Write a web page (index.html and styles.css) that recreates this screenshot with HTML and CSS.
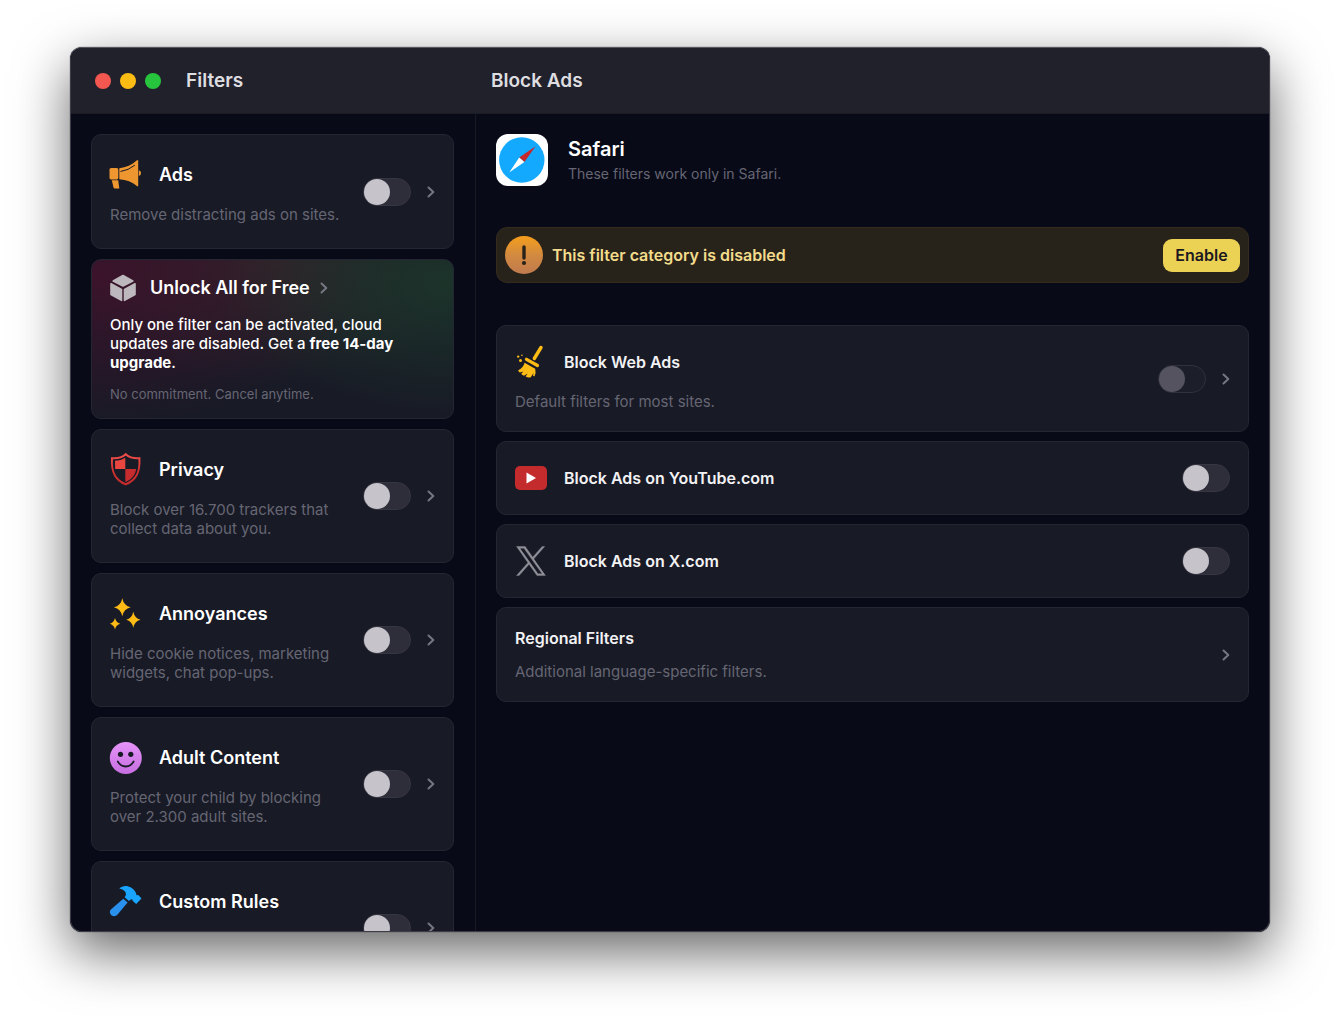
FILE: index.html
```html
<!DOCTYPE html>
<html lang="en">
<head>
<meta charset="utf-8">
<meta name="viewport" content="width=device-width, initial-scale=1">
<title>Filters</title>
<link rel="stylesheet" href="styles.css">
</head>
<body>
<svg class="defs" aria-hidden="true">
  <defs>
    <symbol id="chevron" viewBox="0 0 8 12"><path d="M1.5 1.5 6.3 6 1.5 10.5" fill="none" stroke="currentColor" stroke-width="2" stroke-linecap="round" stroke-linejoin="round"/></symbol>
  </defs>
</svg>
<div class="window">
  <header class="titlebar">
    <div class="titlebar-side">
      <div class="lights">
        <span class="light light-close"></span>
        <span class="light light-min"></span>
        <span class="light light-max"></span>
      </div>
      <h1 class="bar-title">Filters</h1>
    </div>
    <h2 class="bar-title">Block Ads</h2>
  </header>

  <div class="body">
    <nav class="sidebar">
      <section class="card">
        <div class="card-text">
          <div class="card-head">
            <svg class="icon" viewBox="0 0 32 32" aria-hidden="true">
              <g fill="#ee9630">
                <rect x="-.5" y="9" width="8.8" height="11.4" rx="1.6"/>
                <path d="M9.3 9.2C16 8.6 22 6 26.600 1.600Q28.200.3 28.200 2V26.400Q28.200 28.300 26.600 26.800 20 21 9.300 20.300z"/>
                <path d="M28.800 11.200a3 3 0 0 1 0 5.800z"/>
                <path d="M1.800 21.300H8.200L9.300 29.400H4.600Q3.800 29.400 3.500 28.500z"/>
              </g>
              <path d="M10.500 12.500Q18.500 11.300 24.800 6.200" fill="none" stroke="#181a26" stroke-width="1"/>
            </svg>
            <label class="card-title" for="sw-ads">Ads</label>
          </div>
          <p class="desc">Remove distracting ads on sites.</p>
        </div>
        <input class="switch" type="checkbox" id="sw-ads">
        <a class="chev" href="#ads" aria-label="Ads"><svg><use href="#chevron"/></svg></a>
      </section>

      <section class="promo">
        <a class="promo-head" href="#unlock">
          <svg class="promo-icon" viewBox="0 0 26 28" aria-hidden="true">
            <g fill="#bdb8bd" stroke="#bdb8bd" stroke-width="1.600" stroke-linejoin="round">
              <path d="M13 1.500 22.800 7 13 12 3.200 7z"/>
              <path d="M1 9.800 11.500 15.400V26.400L1 20.600z"/>
              <path d="M25 9.800 14.500 15.400V26.400L25 20.600z"/>
            </g>
          </svg>
          <span class="card-title">Unlock All for Free</span>
          <svg class="promo-chev"><use href="#chevron"/></svg>
        </a>
        <p class="promo-text">Only one filter can be activated, cloud updates are disabled. Get a <strong>free 14-day upgrade</strong>.</p>
        <p class="promo-note">No commitment. Cancel anytime.</p>
      </section>

      <section class="card">
        <div class="card-text">
          <div class="card-head">
            <svg class="icon" viewBox="0 0 32 32" aria-hidden="true">
              <defs><linearGradient id="red" x1="0" y1="0" x2="0" y2="1"><stop offset="0" stop-color="#f0504a"/><stop offset=".55" stop-color="#cf3030"/><stop offset="1" stop-color="#c42a2c"/></linearGradient></defs>
              <path d="M15.700.2C12.500 3 6.500 4.600 2 4.200C1.300 15 3 25.500 15.700 30.300C28.400 25.500 30.100 15 29.400 4.200C24.900 4.600 18.900 3 15.700.2z" fill="none" stroke="url(#red)" stroke-width="2"/>
              <path d="M15.300 3.800C12.500 5.600 8.500 6.700 5 6.700L5.200 15H15.300z" fill="#e8463f"/>
              <path d="M15.300 15H26.200C25.200 21 22 25.500 15.300 28z" fill="#c62c2e"/>
            </svg>
            <label class="card-title" for="sw-privacy">Privacy</label>
          </div>
          <p class="desc">Block over 16.700 trackers that collect data about you.</p>
        </div>
        <input class="switch" type="checkbox" id="sw-privacy">
        <a class="chev" href="#privacy" aria-label="Privacy"><svg><use href="#chevron"/></svg></a>
      </section>

      <section class="card">
        <div class="card-text">
          <div class="card-head">
            <svg class="icon" viewBox="0 0 32 32" aria-hidden="true">
              <g fill="#fdbb16">
                <path d="M12.300.3Q13.800 7.800 20.700 9.300 13.800 10.800 12.300 18.300 10.800 10.800 3.900 9.300 10.800 7.800 12.300.3z"/>
                <path d="M23.300 13.700Q24.600 20.300 30.500 21.700 24.600 23.100 23.300 29.700 22 23.100 16.200 21.700 22 20.300 23.300 13.700z"/>
                <path d="M5 20Q6.100 24.600 10.300 25.700 6.100 26.800 5 31.400 3.900 26.800-.2 25.700 3.900 24.600 5 20z"/>
              </g>
            </svg>
            <label class="card-title" for="sw-annoy">Annoyances</label>
          </div>
          <p class="desc">Hide cookie notices, marketing widgets, chat pop-ups.</p>
        </div>
        <input class="switch" type="checkbox" id="sw-annoy">
        <a class="chev" href="#annoyances" aria-label="Annoyances"><svg><use href="#chevron"/></svg></a>
      </section>

      <section class="card">
        <div class="card-text">
          <div class="card-head">
            <svg class="icon" viewBox="0 0 32 32" aria-hidden="true">
              <defs><linearGradient id="pink" x1="0" y1="0" x2="0" y2="1"><stop offset="0" stop-color="#e594f8"/><stop offset="1" stop-color="#c66ee0"/></linearGradient></defs>
              <circle cx="15.800" cy="16" r="16" fill="url(#pink)"/>
              <circle cx="10.500" cy="12.300" r="2.600" fill="#181a26"/>
              <circle cx="20.800" cy="12.300" r="2.600" fill="#181a26"/>
              <path d="M7.800 19.500Q10.500 24.500 15.700 24.500T23.600 19.500" fill="none" stroke="#181a26" stroke-width="1.800" stroke-linecap="round"/>
            </svg>
            <label class="card-title" for="sw-adult">Adult Content</label>
          </div>
          <p class="desc">Protect your child by blocking over 2.300 adult sites.</p>
        </div>
        <input class="switch" type="checkbox" id="sw-adult">
        <a class="chev" href="#adult" aria-label="Adult Content"><svg><use href="#chevron"/></svg></a>
      </section>

      <section class="card card-tall">
        <div class="card-text">
          <div class="card-head">
            <svg class="icon" viewBox="0 0 32 32" aria-hidden="true">
              <path d="M13.300 12.800 17.600 16.400 7.400 28.800Q4.700 31.500 1.300 29.200-1.200 26.600.6 23.800z" fill="#2a90ee"/>
              <path d="M9.300 2.600C12-.6 17.500-1 21 1.600Q26.300 5.200 26.500 9.300L28.300 9.100 31.500 12.600 26.200 18 22.600 14.800 22.300 13.400Q20.600 13 18.900 15L14.600 11.300Q17.200 8.500 14.800 5.300 12.900 3 9.300 2.600z" fill="#18a4ff"/>
            </svg>
            <label class="card-title" for="sw-custom">Custom Rules</label>
          </div>
        </div>
        <input class="switch" type="checkbox" id="sw-custom">
        <a class="chev" href="#custom" aria-label="Custom Rules"><svg><use href="#chevron"/></svg></a>
      </section>
    </nav>

    <main class="main">
      <div class="app">
        <svg class="app-icon" viewBox="0 0 52 52" aria-hidden="true">
          <rect width="52" height="52" rx="12" fill="#fff"/>
          <circle cx="25.800" cy="26" r="22.700" fill="#12a9ff"/>
          <path d="M39.600 12.200 23.200 23.600 28.400 28z" fill="#c6282c"/>
          <path d="M13.200 38.600 23.200 23.600 28.400 28z" fill="#fff"/>
        </svg>
        <div class="app-text">
          <h3 class="app-name">Safari</h3>
          <p class="app-note">These filters work only in Safari.</p>
        </div>
      </div>

      <div class="banner">
        <svg class="banner-icon" viewBox="0 0 38 38" aria-hidden="true">
          <defs><linearGradient id="amber" x1="0" y1="0" x2="0" y2="1"><stop offset="0" stop-color="#f59e1c"/><stop offset=".5" stop-color="#d28a40"/><stop offset="1" stop-color="#c07a4e"/></linearGradient></defs>
          <circle cx="19" cy="19" r="19" fill="url(#amber)"/>
          <path d="M19 11V22" stroke="#28231a" stroke-width="3.400" stroke-linecap="round"/>
          <circle cx="19" cy="27" r="2.100" fill="#28231a"/>
        </svg>
        <p class="banner-text">This filter category is disabled</p>
        <button class="enable" type="button">Enable</button>
      </div>

      <div class="rules">
        <section class="rule">
          <div class="card-text">
            <div class="card-head">
              <svg class="icon" viewBox="0 0 32 32" aria-hidden="true">
                <g stroke="#fdbb16" stroke-linecap="round" fill="none">
                  <path d="M26 1.500 19.300 12.500" stroke-width="3.400"/>
                  <path d="M11.500 13.300 22.500 19.500" stroke-width="3.200"/>
                </g>
                <path d="M9.600 16.800 20.200 22.800Q21.300 27 19.500 30.200L18 30 18.500 27 15.800 31.200Q13 32 10.600 30.600L12.600 27.400 9 29.800Q7.400 29.200 6.200 27.800L8.400 25.400 4.800 26.600Q3.400 25.600 3.200 24.200 8 22.500 9.600 16.800z" fill="#fdbb16"/>
                <g fill="#fdbb16"><circle cx="3.200" cy="10.600" r="1.200"/><circle cx="6.900" cy="9.300" r=".8"/><circle cx="5.500" cy="14.400" r="1.500"/></g>
              </svg>
              <label class="rule-title" for="sw-web">Block Web Ads</label>
            </div>
            <p class="desc">Default filters for most sites.</p>
          </div>
          <input class="switch" type="checkbox" id="sw-web" disabled>
          <a class="chev" href="#web" aria-label="Block Web Ads"><svg><use href="#chevron"/></svg></a>
        </section>

        <section class="rule">
          <div class="card-text">
            <div class="card-head">
              <svg class="icon" viewBox="0 0 32 32" aria-hidden="true">
                <rect y="4" width="32" height="24" rx="5" fill="#c32b2d"/>
                <path d="M11.500 10.600 21 16 11.500 21.400z" fill="#fff"/>
              </svg>
              <label class="rule-title" for="sw-yt">Block Ads on YouTube.com</label>
            </div>
          </div>
          <input class="switch" type="checkbox" id="sw-yt">
        </section>

        <section class="rule">
          <div class="card-text">
            <div class="card-head">
              <svg class="icon" viewBox="-16 -10 330 320" aria-hidden="true">
                <path d="M178.570 127.150 290.270 0h-26.460l-97.030 110.380L89.340 0H0l117.130 166.930L0 300.250h26.460l102.400-116.590 81.800 116.590h89.340M36.010 19.540H76.660l187.130 262.130h-40.660" fill="#8f8f97" stroke="#8f8f97" stroke-width="4"/>
              </svg>
              <label class="rule-title" for="sw-x">Block Ads on X.com</label>
            </div>
          </div>
          <input class="switch" type="checkbox" id="sw-x">
        </section>

        <section class="rule">
          <div class="card-text">
            <h3 class="rule-title">Regional Filters</h3>
            <p class="desc">Additional language-specific filters.</p>
          </div>
          <a class="chev" href="#regional" aria-label="Regional Filters"><svg><use href="#chevron"/></svg></a>
        </section>
      </div>
    </main>
  </div>
</div>
</body>
</html>
```
FILE: styles.css
```css
* { box-sizing: border-box; }

body {
  margin: 0;
  height: 100vh;
  padding: 47px 70px 93px;
  overflow: hidden;
  background: #fff;
  color: #fff;
  font-family: Inter, "Liberation Sans", sans-serif;
  font-size: 15px;
}

h1, h2, h3, p { margin: 0; }
a { color: inherit; text-decoration: none; }
.defs { position: absolute; width: 0; height: 0; }

.window {
  display: flex;
  flex-direction: column;
  height: 100%;
  overflow: hidden;
  border: 1px solid #3c3d49;
  border-top-color: #55565f;
  border-radius: 12px;
  background: #080a18;
  box-shadow: 0 0 1px #000, 0 20px 54px rgba(0, 0, 0, .6);
}

/* Title bar */
.titlebar {
  display: grid;
  grid-template-columns: 405px 1fr;
  align-items: center;
  flex: none;
  height: 66px;
  background: #21212b;
  border-bottom: 1px solid #1b1b25;
}
.titlebar > .bar-title { padding-left: 15px; }
.titlebar-side { display: flex; align-items: center; gap: 25px; padding-left: 24px; }
.lights { display: flex; gap: 9px; }
.light { width: 16px; height: 16px; border-radius: 50%; }
.light-close { background: #f4574f; }
.light-min { background: #fbbc14; }
.light-max { background: #27c53e; }
.bar-title { font-size: 19px; line-height: 24px; font-weight: 600; color: #dedee1; }

.body {
  display: grid;
  grid-template-columns: 405px 1fr;
  flex: 1;
  min-height: 0;
}

/* Sidebar */
.sidebar {
  display: flex;
  flex-direction: column;
  gap: 10px;
  padding: 20px 21px 20px 20px;
  overflow: hidden;
  border-right: 1px solid #1b1a22;
}

.card, .rule, .promo {
  flex: none;
  border: 1px solid #242632;
  border-radius: 10px;
  background: #181a26;
}
.card, .rule { display: flex; align-items: center; gap: 16px; }
.card { padding: 24px 18px; }
.card-tall { min-height: 134px; }
.card-tall .card-text { align-self: flex-start; }
.card-text { display: flex; flex-direction: column; gap: 14px; flex: 1; min-width: 0; }
.card-head { display: flex; align-items: center; gap: 17px; }
.icon { flex: none; width: 32px; height: 32px; overflow: visible; }
.card-title { font-size: 18px; line-height: 24px; font-weight: 600; }
.desc { font-size: 15px; line-height: 19px; color: #666673; }

.switch {
  appearance: none;
  flex: none;
  width: 48px;
  height: 28px;
  margin: 0;
  padding: 0;
  border: 1px solid #353641;
  border-radius: 14px;
  background: #2d2e3a;
}
.switch::before {
  content: "";
  display: block;
  width: 26px;
  height: 26px;
  border-radius: 50%;
  background: #c6c4ca;
}
.switch:checked::before { margin-left: auto; }
.switch:disabled { background: #1c1e2a; border-color: #30313c; }
.switch:disabled::before { background: #54535f; }

.chev { display: flex; flex: none; color: #777783; }
.chev svg, .promo-chev { width: 8px; height: 12px; }

/* Upgrade card */
.promo {
  padding: 14px 18px 16px;
  background:
    radial-gradient(ellipse 65% 85% at 100% 15%, rgba(28, 62, 44, .7), rgba(28, 62, 44, 0)),
    radial-gradient(ellipse 75% 95% at 0 10%, rgba(70, 16, 44, .75), rgba(70, 16, 44, 0)),
    radial-gradient(ellipse 60% 80% at 50% 0, rgba(66, 50, 44, .45), rgba(66, 50, 44, 0)),
    #181a26;
}
.promo-head { display: flex; align-items: center; gap: 14px; height: 28px; }
.promo-head .card-title { margin-right: -4px; }
.promo-icon { width: 26px; height: 28px; }
.promo-chev { color: #777783; }
.promo-text { margin-top: 13px; font-size: 15px; line-height: 19px; font-weight: 500; }
.promo-text strong { font-weight: 700; }
.promo-note { margin-top: 14px; font-size: 13px; line-height: 16px; color: #666673; }

/* Detail pane */
.main { padding: 20px; }
.app { display: flex; align-items: center; gap: 20px; }
.app-icon { flex: none; width: 52px; height: 52px; }
.app-name { font-size: 20px; line-height: 26px; font-weight: 600; }
.app-note { margin-top: 2px; font-size: 14px; line-height: 20px; color: #666673; }

.banner {
  display: flex;
  align-items: center;
  gap: 9px;
  height: 56px;
  margin: 41px 0 42px;
  padding: 0 8px;
  border: 1px solid #352c1f;
  border-radius: 11px;
  background: #28231a;
}
.banner-icon { flex: none; width: 38px; height: 38px; }
.banner-text { flex: 1; font-size: 16px; line-height: 20px; font-weight: 600; color: #f3dc8c; }
.enable {
  width: 77px;
  height: 33px;
  padding: 0;
  border: 0;
  border-radius: 9px;
  background: #ebd154;
  color: #1b1820;
  font: 600 16px/20px Inter, "Liberation Sans", sans-serif;
}

.rules { display: flex; flex-direction: column; gap: 9px; }
.rule { padding: 20px 18px; }
.rule-title { font-size: 16px; line-height: 20px; font-weight: 600; color: #f2f2f4; }
```
